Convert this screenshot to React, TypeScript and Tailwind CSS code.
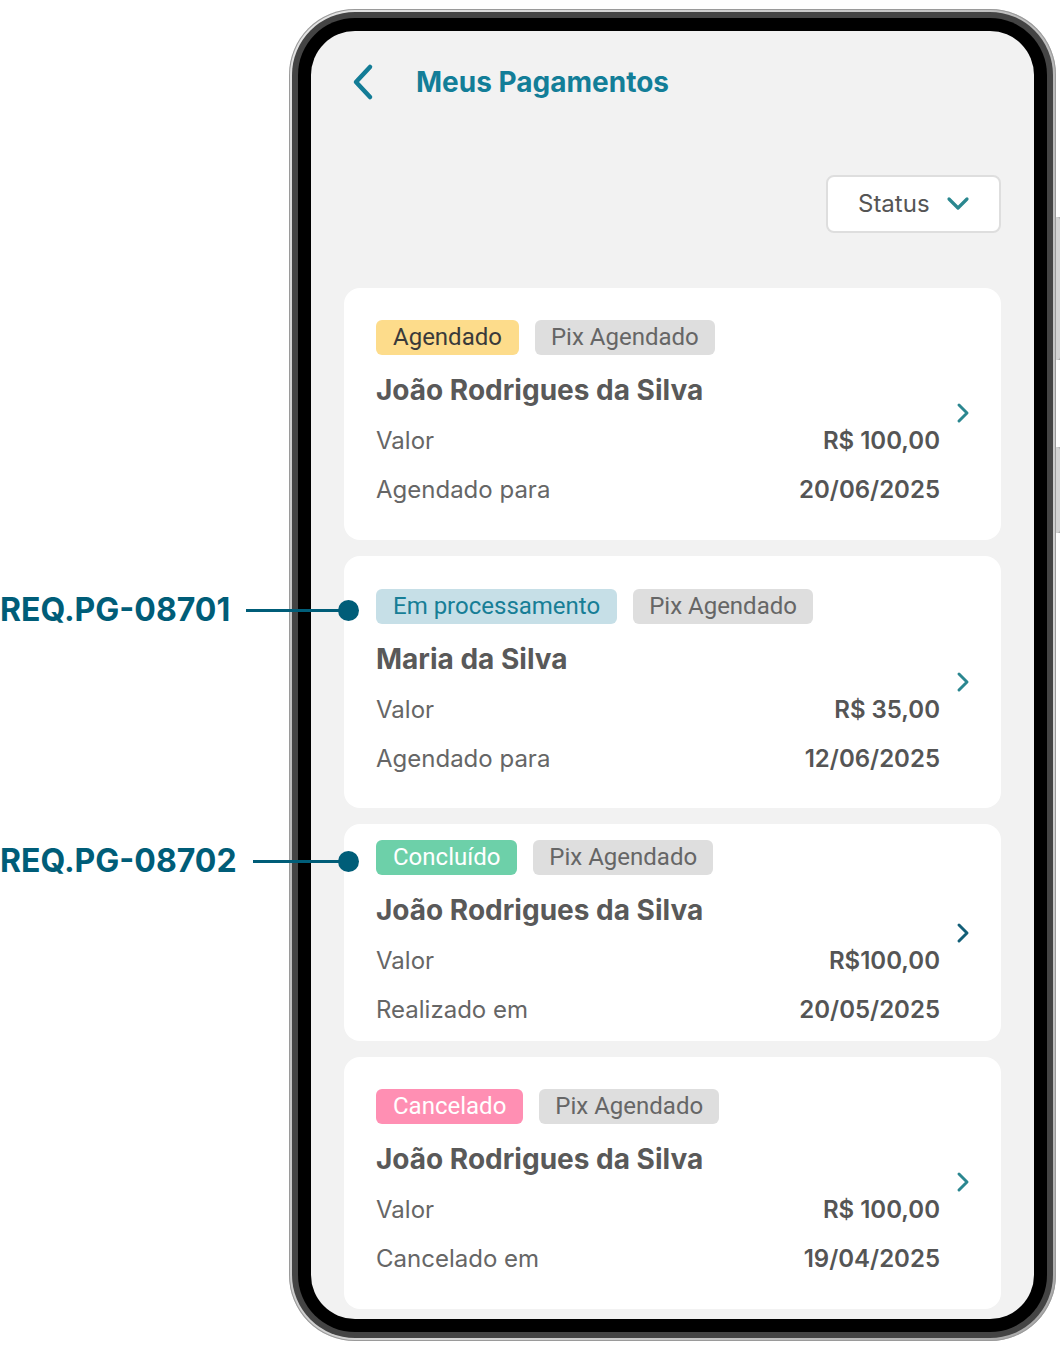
import React from "react";

type Payment = {
  status: string;
  statusClass: string;
  name: string;
  value: string;
  dateLabel: string;
  date: string;
  pad: string;
  chevron: string;
};

const payments: Payment[] = [
  {
    status: "Agendado",
    statusClass: "bg-[#fddc8b] text-[#3a3a3a]",
    name: "João Rodrigues da Silva",
    value: "R$ 100,00",
    dateLabel: "Agendado para",
    date: "20/06/2025",
    pad: "pt-[32px] pb-[34px]",
    chevron: "#2b8790",
  },
  {
    status: "Em processamento",
    statusClass: "bg-[#c6dfe7] text-[#177e96]",
    name: "Maria da Silva",
    value: "R$ 35,00",
    dateLabel: "Agendado para",
    date: "12/06/2025",
    pad: "pt-[33px] pb-[33px]",
    chevron: "#2b8790",
  },
  {
    status: "Concluído",
    statusClass: "bg-[#6dd0a9] text-white",
    name: "João Rodrigues da Silva",
    value: "R$100,00",
    dateLabel: "Realizado em",
    date: "20/05/2025",
    pad: "pt-[16px] pb-[15px]",
    chevron: "#135f78",
  },
  {
    status: "Cancelado",
    statusClass: "bg-[#ff8fb3] text-white",
    name: "João Rodrigues da Silva",
    value: "R$ 100,00",
    dateLabel: "Cancelado em",
    date: "19/04/2025",
    pad: "pt-[32px] pb-[34px]",
    chevron: "#2b8790",
  },
];

function PaymentCard({ p }: { p: Payment }) {
  return (
    <div className={`flex items-center rounded-[16px] bg-white pl-[32px] pr-[27px] ${p.pad}`}>
      <div className="flex flex-1 flex-col">
        <div className="flex gap-[16px] font-['Roboto',sans-serif] text-[24px] leading-[35px]">
          <span className={`rounded-[6px] px-[17px] ${p.statusClass}`}>{p.status}</span>
          <span className="rounded-[6px] bg-[#dedede] px-[16px] text-[#666666]">Pix Agendado</span>
        </div>
        <div className="mt-[17px] font-['Inter',sans-serif] text-[28px] font-bold leading-[36px] text-[#595959]">
          {p.name}
        </div>
        <div className="mt-[17px] flex justify-between font-['Inter',sans-serif] text-[24px] leading-[32px]">
          <span className="text-[#666666]">Valor</span>
          <span className="font-semibold text-[#555555]">{p.value}</span>
        </div>
        <div className="mt-[17px] flex justify-between font-['Inter',sans-serif] text-[24px] leading-[32px]">
          <span className="text-[#666666]">{p.dateLabel}</span>
          <span className="font-semibold text-[#555555]">{p.date}</span>
        </div>
      </div>
      <svg width="20" height="22" viewBox="0 0 20 22" className="ml-[14px]">
        <path d="M5 3 L13 11 L5 19" fill="none" stroke={p.chevron} strokeWidth="3" strokeLinecap="round" strokeLinejoin="round" />
      </svg>
    </div>
  );
}

function Annotation({ label, top }: { label: string; top: string }) {
  return (
    <div className={`absolute left-0 flex w-[359px] items-center ${top}`}>
      <span className="font-['Inter',sans-serif] text-[32px] font-bold leading-[40px] text-[#005d78]">{label}</span>
      <span className="ml-[16px] h-[3px] flex-1 bg-[#005d78]" />
      <span className="-ml-[2px] h-[21px] w-[21px] rounded-full bg-[#005d78]" />
    </div>
  );
}

export default function App() {
  return (
    <div className="relative h-[1352px] w-[1060px] overflow-hidden bg-white">
      {/* phone */}
      <div className="relative ml-[289px] mt-[9px] h-[1332px] w-[767px] rounded-[66px] bg-[linear-gradient(135deg,#e4e4e4,#b9b9b9_40%,#d6d6d6_70%,#a8a8a8)] p-[3px] shadow-[inset_0_0_0_1px_#9a9a9a]">
        <div className="h-full w-full rounded-[63px] bg-[#444444] p-[6px]">
          <div className="h-full w-full rounded-[57px] bg-black p-[13px]">
            <div className="flex h-full w-full flex-col overflow-hidden rounded-[44px] bg-[#f2f2f2] px-[33px]">
              <div className="flex h-[102px] shrink-0 items-center">
                <svg width="26" height="38" viewBox="0 0 26 38" className="ml-[6px]">
                  <path d="M20 4 L6 19 L20 34" fill="none" stroke="#137c96" strokeWidth="4.5" strokeLinecap="round" strokeLinejoin="round" />
                </svg>
                <h1 className="ml-[40px] font-['Inter',sans-serif] text-[28px] font-bold text-[#137e98]">Meus Pagamentos</h1>
              </div>
              <div className="mt-[42px] flex shrink-0 justify-end">
                <button className="flex h-[58px] w-[175px] items-center rounded-[8px] border-2 border-[#dedede] bg-white pl-[30px]">
                  <span className="font-['Inter',sans-serif] text-[24px] text-[#555555]">Status</span>
                  <svg width="24" height="16" viewBox="0 0 24 16" className="ml-[16px]">
                    <path d="M3 3 L12 12 L21 3" fill="none" stroke="#2a878f" strokeWidth="3.2" strokeLinecap="round" strokeLinejoin="round" />
                  </svg>
                </button>
              </div>
              <div className="mt-[55px] flex flex-col gap-[16px]">
                {payments.map((p, i) => (
                  <PaymentCard key={i} p={p} />
                ))}
              </div>
            </div>
          </div>
        </div>
        {/* side buttons */}
        <div className="absolute right-[-5px] top-[208px] h-[143px] w-[5px] rounded-r-[3px] bg-[#d4d4d4] shadow-[inset_-1px_0_0_#9a9a9a]" />
        <div className="absolute right-[-5px] top-[438px] h-[86px] w-[5px] rounded-r-[3px] bg-[#d4d4d4] shadow-[inset_-1px_0_0_#9a9a9a]" />
      </div>
      <Annotation label="REQ.PG-08701" top="top-[590px]" />
      <Annotation label="REQ.PG-08702" top="top-[841px]" />
    </div>
  );
}
